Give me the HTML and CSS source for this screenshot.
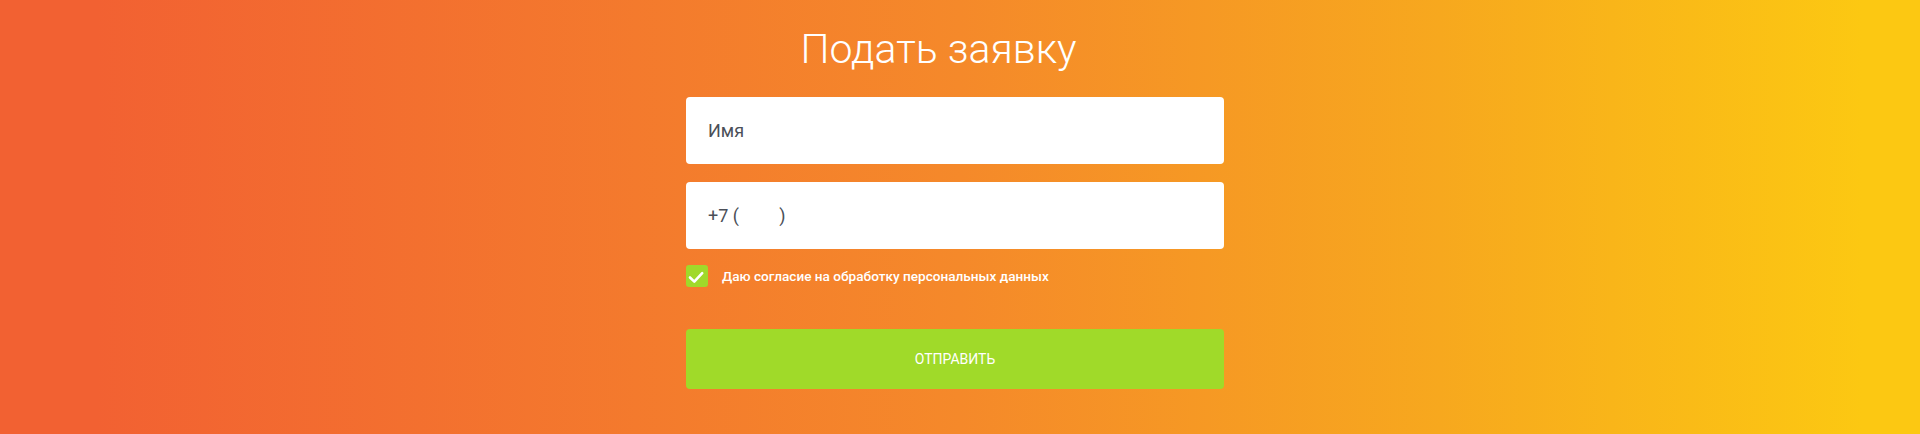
FILE: index.html
```html
<!DOCTYPE html>
<html lang="ru">
<head>
    <meta charset="UTF-8">
    <meta name="viewport" content="width=device-width, initial-scale=1.0">
    <title>Подать заявку</title>
    <link rel="stylesheet" href="styles.css">
</head>
<body>
    <section class="request">
        <form class="request-form">
            <h1>Подать заявку</h1>

            <input type="text" class="field" placeholder="Имя">
            <input type="tel" class="field" value="+7 (         )">

            <label class="agree">
                <span class="agree-box">
                    <svg width="22" height="22" viewBox="0 0 22 22">
                        <path d="M4 12.5 L8.3 16.6 L16.2 8.2" fill="none" stroke="#fff" stroke-width="2.6" stroke-linecap="round" stroke-linejoin="round"/>
                    </svg>
                </span>
                Даю согласие на обработку персональных данных
            </label>

            <button type="button" class="send">Отправить</button>
        </form>
    </section>
</body>
</html>
```

FILE: styles.css
```css
body {
    margin: 0;
    font-family: 'Roboto', 'Noto Sans', sans-serif;
    background: linear-gradient(to right, #f26132 5%, #f5892a 50%, #f7a81e 75%, #fcc812 97%);
    min-height: 434px;
}

.request {
    padding-top: 25px;
}

.request-form {
    width: 538px;
    padding-right: 10px;
    margin: 0 auto;
    display: flex;
    flex-direction: column;
}

h1 {
    margin: 0 0 24px;
    padding-right: 33px;
    font-size: 41px;
    font-weight: 300;
    line-height: 48px;
    color: #fff;
    text-align: center;
}

.field {
    box-sizing: border-box;
    width: 100%;
    height: 67px;
    margin: 0 0 18px;
    padding: 0 22px;
    border: none;
    border-radius: 4px;
    background-color: #fff;
    font-family: inherit;
    font-size: 18px;
    color: #4b4f58;
    outline: none;
}

.field::placeholder {
    color: #4b4f58;
    opacity: 1;
}

.field + .field {
    margin-bottom: 16px;
}

.agree {
    display: flex;
    align-items: center;
    gap: 14px;
    font-size: 13.6px;
    font-weight: 500;
    color: #fff;
    cursor: pointer;
}

.agree-box {
    width: 22px;
    height: 22px;
    border-radius: 3px;
    background-color: #a0d92a;
    display: flex;
}

.send {
    margin-top: 42px;
    height: 60px;
    border: none;
    border-radius: 4px;
    background-color: #a0da29;
    color: #fff;
    font-family: inherit;
    font-size: 14px;
    text-transform: uppercase;
    cursor: pointer;
}
```
